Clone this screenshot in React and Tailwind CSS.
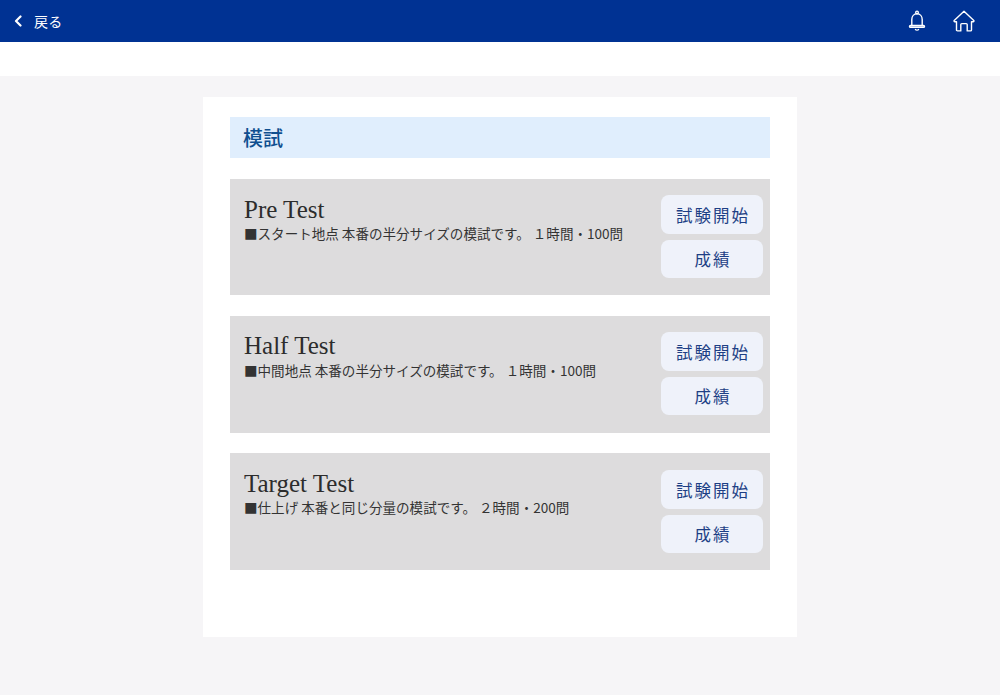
import React from "react";

const sans = "font-['Noto_Sans_CJK_JP','Noto_Sans',sans-serif]";

const tests = [
  { name: "Pre Test", desc: "■スタート地点 本番の半分サイズの模試です。 １時間・100問", box: "h-[116px] pt-[16px]", gap: "-mt-[1px]", col: "mt-0" },
  { name: "Half Test", desc: "■中間地点 本番の半分サイズの模試です。 １時間・100問", box: "h-[117px] pt-[15px]", gap: "mt-0", col: "mt-[1px]" },
  { name: "Target Test", desc: "■仕上げ 本番と同じ分量の模試です。 ２時間・200問", box: "h-[117px] pt-[16px]", gap: "-mt-[1px]", col: "mt-[1px]" },
];

function Card({ t }) {
  return (
    <section className={`${t.box} bg-[#dddcdd] flex justify-between pl-[14px] pr-[7px]`}>
      <div>
        <h2 className="font-['Liberation_Serif',serif] text-[25px] leading-[28px] text-[#2c2c2c] mt-[1px]">{t.name}</h2>
        <p className={`${t.gap} text-[13.55px] leading-[20px] text-[#333333]`}>{t.desc}</p>
      </div>
      <div className={`${t.col} flex flex-col gap-[6px] w-[102px]`}>
        <button className="h-[39px] pl-[2px] pt-[1px] rounded-[8px] bg-[#eff2fa] text-[#1d3f85] text-[16.500px] tracking-[2px]">試験開始</button>
        <button className="h-[38px] pl-[2px] pt-[1px] rounded-[8px] bg-[#eff2fa] text-[#1d3f85] text-[16.500px] tracking-[2px]">成績</button>
      </div>
    </section>
  );
}

export default function App() {
  return (
    <div className={`${sans} w-[1000px] h-[695px] overflow-hidden bg-[#f6f5f7] flex flex-col`}>
      <header className="h-[42px] bg-[#003293] flex items-center justify-between text-white shrink-0 border-b border-[#5f7fbd] box-content -mb-px">
        <div className="flex items-center pl-[14px]">
          <svg width="9" height="12" viewBox="0 0 9 12" fill="none" stroke="white" strokeWidth="2.2" strokeLinecap="round" strokeLinejoin="round">
            <path d="M6.5 1.5 2 6l4.5 4.5" />
          </svg>
          <span className="ml-[11px] text-[14px] tracking-[0.2px]">戻る</span>
        </div>
        <div className="flex items-center gap-[25px] pr-[25px]">
          <svg width="22" height="24" viewBox="0 0 22 24" fill="none" stroke="white" strokeWidth="1.4" strokeLinecap="round" strokeLinejoin="round">
            <circle cx="11" cy="3.400" r="1.300" />
            <path d="M5.800 16.500v-6C5.800 7.200 8 4.700 11 4.700s5.200 2.500 5.200 5.800v6" />
            <path d="M4.500 16.500h13c.7 0 1 .4 1 .9s-.3.900-1 .900h-13c-.7 0-1-.4-1-.9s.3-.9 1-.9Z" />
            <path d="M9.500 20.600c.6.700 2.400.7 3 0" />
          </svg>
          <svg width="22" height="22" viewBox="0 0 22 22" fill="none" stroke="white" strokeWidth="1.4" strokeLinecap="round" strokeLinejoin="round">
            <path d="M1.200 10.500 11 1.300l9.800 9.200c.4.6 0 1.200-.6 1.200h-1.700v8.200c0 .6-.4 1-1 1h-3.300v-6.300c0-.6-.4-1-1-1H8.800c-.6 0-1 .4-1 1v6.300H4.500c-.6 0-1-.4-1-1v-8.200H1.800c-.6 0-1-.6-.6-1.200Z" />
          </svg>
        </div>
      </header>
      <div className="h-[34px] bg-white shrink-0" />
      <main className="flex-1 flex justify-center pt-[21px]">
        <div className="w-[594px] h-[540px] bg-white px-[27px] pt-[20px]">
          <h1 className="h-[41px] bg-[#e0eefd] flex items-center pl-[13px] text-[20px] font-medium text-[#0f4f8f]">模試</h1>
          <div className="mt-[21px] flex flex-col">
            <Card t={tests[0]} />
            <div className="h-[21px]" />
            <Card t={tests[1]} />
            <div className="h-[20px]" />
            <Card t={tests[2]} />
          </div>
        </div>
      </main>
    </div>
  );
}
